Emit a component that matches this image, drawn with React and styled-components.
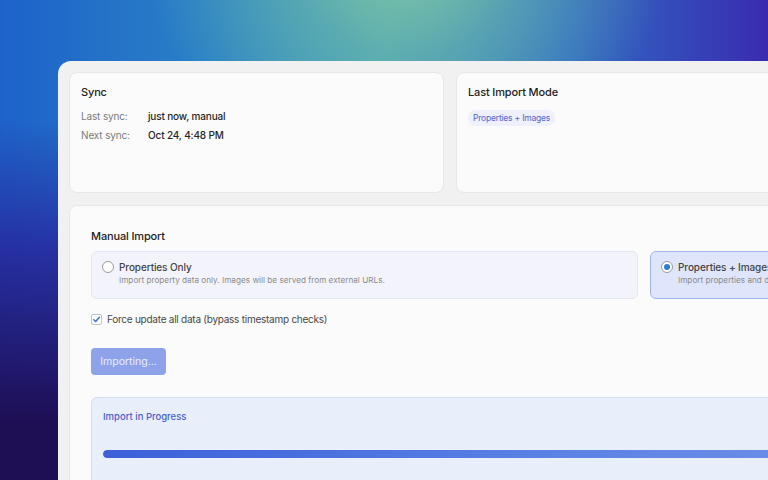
import styled, { createGlobalStyle } from "styled-components";

/////////////////// GLOBAL
const GlobalStyle = createGlobalStyle`
  html, body {
    margin: 0;
    padding: 0;
    width: 768px;
    height: 480px;
    overflow: hidden;
  }
  body {
    font-family: Inter, "Noto Sans", "Liberation Sans", sans-serif;
  }
`;

/////////////////// STYLED COMPONENTS
const Page = styled.div`
  box-sizing: border-box;
  width: 768px;
  height: 480px;
  overflow: hidden;
  padding: 61px 0 0 58px;
  background:
    radial-gradient(ellipse 260px 230px at 53% -10%, rgba(128, 198, 164, 1) 0%, rgba(110, 185, 170, 0.55) 45%, rgba(90, 160, 190, 0) 100%),
    linear-gradient(180deg, rgba(0, 0, 0, 0) 0%, rgba(0, 0, 0, 0) 25%, rgba(40, 30, 150, 0.75) 52%, rgba(30, 14, 84, 1) 88%),
    linear-gradient(90deg, #1d62c9 0%, #2a82c6 28%, #49a3b6 50%, #2f6cc4 74%, #3a2bb0 100%);
`;

const Panel = styled.div`
  box-sizing: border-box;
  width: 1300px;
  min-height: 460px;
  padding: 11px;
  background: #f1f1f1;
  border-radius: 13px 0 0 0;
`;

const TopRow = styled.div`
  display: grid;
  grid-template-columns: 375px 375px;
  gap: 12px;
`;

const Card = styled.div`
  box-sizing: border-box;
  background: #fbfbfb;
  border: 1px solid #e7e7e7;
  border-radius: 8px;
  height: ${(p) => p.height || "auto"};
  padding: ${(p) => p.padding || "11px"};
  margin-top: ${(p) => p.mt || "0"};
`;

const Title = styled.h3`
  margin: 0 0 ${(p) => p.mb || "8px"} 0;
  font-size: 11px;
  letter-spacing: -0.15px;
  line-height: 16px;
  font-weight: 500;
  color: #222;
`;

const InfoRow = styled.div`
  display: flex;
  font-size: 10px;
  letter-spacing: -0.15px;
  line-height: 14px;
  margin-top: ${(p) => p.mt || "5px"};
`;

const InfoLabel = styled.span`
  width: 67px;
  color: #7a7a7a;
`;

const InfoValue = styled.span`
  color: #262626;
  font-weight: 500;
`;

const Pill = styled.span`
  display: inline-block;
  padding: 2px 5px;
  border-radius: 9px;
  background: #eef0fb;
  color: #5565cc;
  font-size: 8.5px;
  letter-spacing: -0.2px;
  line-height: 12px;
`;

const Options = styled.div`
  display: grid;
  grid-template-columns: 547px 547px;
  gap: 12px;
`;

const Option = styled.div`
  box-sizing: border-box;
  height: 48px;
  display: flex;
  align-items: flex-start;
  gap: 5px;
  padding: 8px 10px;
  border-radius: 6px;
  background: ${(p) => (p.selected ? "#dfe6fb" : "#f3f4fb")};
  border: 1px solid ${(p) => (p.selected ? "#a3b4ee" : "#e3e6f3")};
`;

const Radio = styled.span`
  box-sizing: border-box;
  flex: none;
  width: 12px;
  height: 12px;
  margin-top: 1px;
  border-radius: 50%;
  border: 1px solid #9a9a9a;
  background: #fff;
  display: flex;
  align-items: center;
  justify-content: center;

  &::after {
    content: "";
    width: 6px;
    height: 6px;
    border-radius: 50%;
    background: ${(p) => (p.checked ? "#2f7bd0" : "transparent")};
  }
`;

const OptionText = styled.div`
  display: flex;
  flex-direction: column;
`;

const OptionName = styled.span`
  font-size: 10px;
  letter-spacing: -0.1px;
  line-height: 14px;
  font-weight: 500;
  color: #454545;
`;

const OptionDesc = styled.span`
  font-size: 8.2px;
  line-height: 12px;
  color: #8a8a8a;
`;

const CheckRow = styled.label`
  display: flex;
  align-items: center;
  gap: 5px;
  margin-top: 13px;
  font-size: 10px;
  letter-spacing: -0.25px;
  line-height: 14px;
  color: #474747;
`;

const Box = styled.span`
  box-sizing: border-box;
  width: 11px;
  height: 11px;
  border-radius: 2px;
  border: 1px solid #b8c2d8;
  background: #fff;
  display: flex;
  align-items: center;
  justify-content: center;
`;

const Button = styled.button`
  display: block;
  margin-top: 22px;
  width: 75px;
  height: 27px;
  border: none;
  border-radius: 4px;
  background: #8ea2ea;
  color: #e9edff;
  font-family: inherit;
  font-size: 10.5px;
`;

const Progress = styled.div`
  box-sizing: border-box;
  margin-top: 22px;
  height: 120px;
  padding: 12px 11px;
  border-radius: 6px;
  background: #e9eefb;
  border: 1px solid #d4def3;
`;

const ProgressTitle = styled.div`
  font-size: 9.5px;
  line-height: 14px;
  font-weight: 500;
  color: #4a5fc8;
`;

const Track = styled.div`
  margin-top: 26px;
  height: 8px;
  border-radius: 4px;
  background: #d8e1f6;
  overflow: hidden;
`;

const Fill = styled.div`
  height: 100%;
  border-radius: 4px;
  background: linear-gradient(90deg, #3d5fd9 0%, #5a80e4 40%, #6a8ee6 65%, #86a4ee 100%);
`;

function App() {
  const progress = 88;
  return (
    <>
      <GlobalStyle />
      <Page>
        <Panel>
          <TopRow>
            <Card height="121px">
              <Title mb="0">Sync</Title>
              <InfoRow mt="9px">
                <InfoLabel>Last sync:</InfoLabel>
                <InfoValue>just now, manual</InfoValue>
              </InfoRow>
              <InfoRow>
                <InfoLabel>Next sync:</InfoLabel>
                <InfoValue>Oct 24, 4:48 PM</InfoValue>
              </InfoRow>
            </Card>
            <Card height="121px">
              <Title mb="5px">Last Import Mode</Title>
              <Pill>Properties + Images</Pill>
            </Card>
          </TopRow>

          <Card mt="12px" padding="22px 21px">
            <Title mb="7px">Manual Import</Title>
            <Options>
              <Option>
                <Radio />
                <OptionText>
                  <OptionName>Properties Only</OptionName>
                  <OptionDesc>
                    Import property data only. Images will be served from external URLs.
                  </OptionDesc>
                </OptionText>
              </Option>
              <Option selected>
                <Radio checked />
                <OptionText>
                  <OptionName>Properties + Images</OptionName>
                  <OptionDesc>
                    Import properties and download all images to local storage.
                  </OptionDesc>
                </OptionText>
              </Option>
            </Options>

            <CheckRow>
              <Box>
                <svg width="9" height="9" viewBox="0 0 10 10">
                  <path
                    d="M2 5.2 L4.1 7.3 L8.2 2.6"
                    fill="none"
                    stroke="#2f6fd0"
                    strokeWidth="1.6"
                    strokeLinecap="round"
                    strokeLinejoin="round"
                  />
                </svg>
              </Box>
              Force update all data (bypass timestamp checks)
            </CheckRow>

            <Button disabled>Importing...</Button>

            <Progress>
              <ProgressTitle>Import in Progress</ProgressTitle>
              <Track>
                <Fill style={{ width: progress + "%" }} />
              </Track>
            </Progress>
          </Card>
        </Panel>
      </Page>
    </>
  );
}

export default App;
